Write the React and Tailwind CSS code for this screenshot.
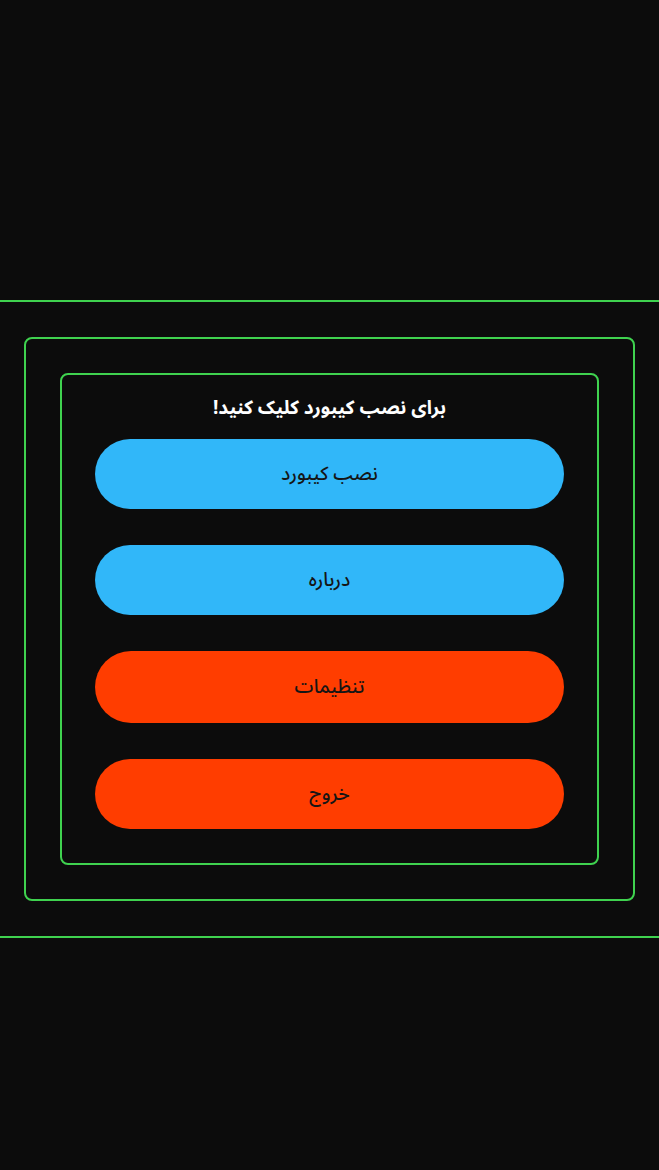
export default function App() {
  const buttons = [
    { label: "نصب کیبورد", cls: "bg-[#31b7f9] h-[70px]" },
    { label: "درباره", cls: "bg-[#31b7f9] h-[70px]" },
    { label: "تنظیمات", cls: "bg-[#ff3d00] h-[72px]" },
    { label: "خروج", cls: "bg-[#ff3d00] h-[70px]" },
  ];

  return (
    <div
      dir="rtl"
      className="min-h-[1170px] w-full bg-[#0c0c0c] pt-[300px]"
      style={{ fontFamily: '"Noto Sans Arabic", "DejaVu Sans", sans-serif' }}
    >
      <div className="border-y-2 border-[#3fd24f] px-6 py-[35px]">
        <div className="rounded-lg border-2 border-[#3fd24f] p-[34px]">
          <div className="rounded-lg border-2 border-[#3fd24f] px-[33px] pt-[18px] pb-[34px]">
            <h1 className="mb-4 text-center text-[19px] font-bold leading-[30px] text-white">
              برای نصب کیبورد کلیک کنید!
            </h1>
            <div className="flex flex-col gap-9">
              {buttons.map((b) => (
                <button
                  key={b.label}
                  className={`${b.cls} flex w-full items-center justify-center rounded-full text-[19px] font-medium text-[#151515]`}
                >
                  {b.label}
                </button>
              ))}
            </div>
          </div>
        </div>
      </div>
    </div>
  );
}
